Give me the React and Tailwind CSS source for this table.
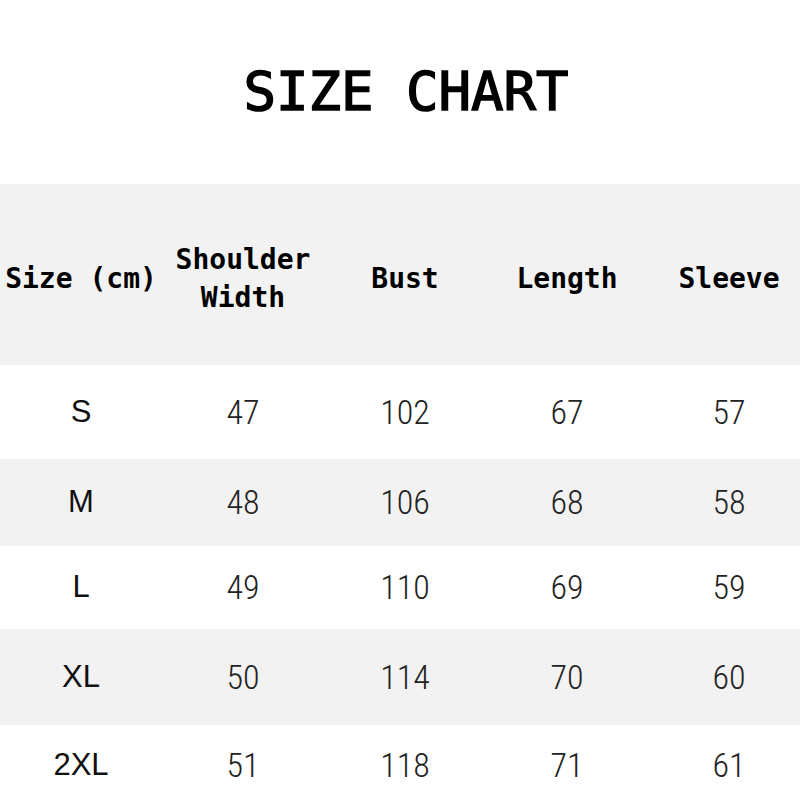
const rows = [
    { size: "S", vals: ["47", "102", "67", "57"], h: "h-[94px]", bg: "bg-white" },
    { size: "M", vals: ["48", "106", "68", "58"], h: "h-[87px]", bg: "bg-[#f2f2f2]" },
    { size: "L", vals: ["49", "110", "69", "59"], h: "h-[83px]", bg: "bg-white" },
    { size: "XL", vals: ["50", "114", "70", "60"], h: "h-[96px]", bg: "bg-[#f2f2f2]" },
    { size: "2XL", vals: ["51", "118", "71", "61"], h: "h-[80px]", bg: "bg-white" },
];

const mono = "font-['DejaVu_Sans_Mono',monospace]";

const App = () => {
    return (
        <div className="w-[800px] h-[800px] overflow-hidden bg-white text-black">
            <div className={`h-[184px] pl-[12px] flex items-center justify-center text-[54px] font-normal leading-none [-webkit-text-stroke:1.5px_black] ${mono}`}>
                SIZE CHART
            </div>
            <div className={`h-[181px] pt-[8px] bg-[#f2f2f2] grid grid-cols-[162px_162px_162px_162px_162px] items-center text-[28px] font-bold leading-[38px] ${mono}`}>
                <div className="text-center whitespace-nowrap">Size (cm)</div>
                <div className="text-center">Shoulder<br />Width</div>
                <div className="text-center">Bust</div>
                <div className="text-center">Length</div>
                <div className="text-center">Sleeve</div>
            </div>
            {rows.map((r) => (
                <div key={r.size} className={`${r.h} ${r.bg} grid grid-cols-[162px_162px_162px_162px_162px] items-center`}>
                    <div className="text-center text-[31px] font-['Liberation_Sans',Arial,sans-serif] text-[#111]">{r.size}</div>
                    {r.vals.map((v, i) => (
                        <div key={i} className="text-center text-[34px] font-light font-['Liberation_Sans_Narrow','Roboto_Condensed',sans-serif] text-[#222]">{v}</div>
                    ))}
                </div>
            ))}
        </div>
    );
};

export default App;
